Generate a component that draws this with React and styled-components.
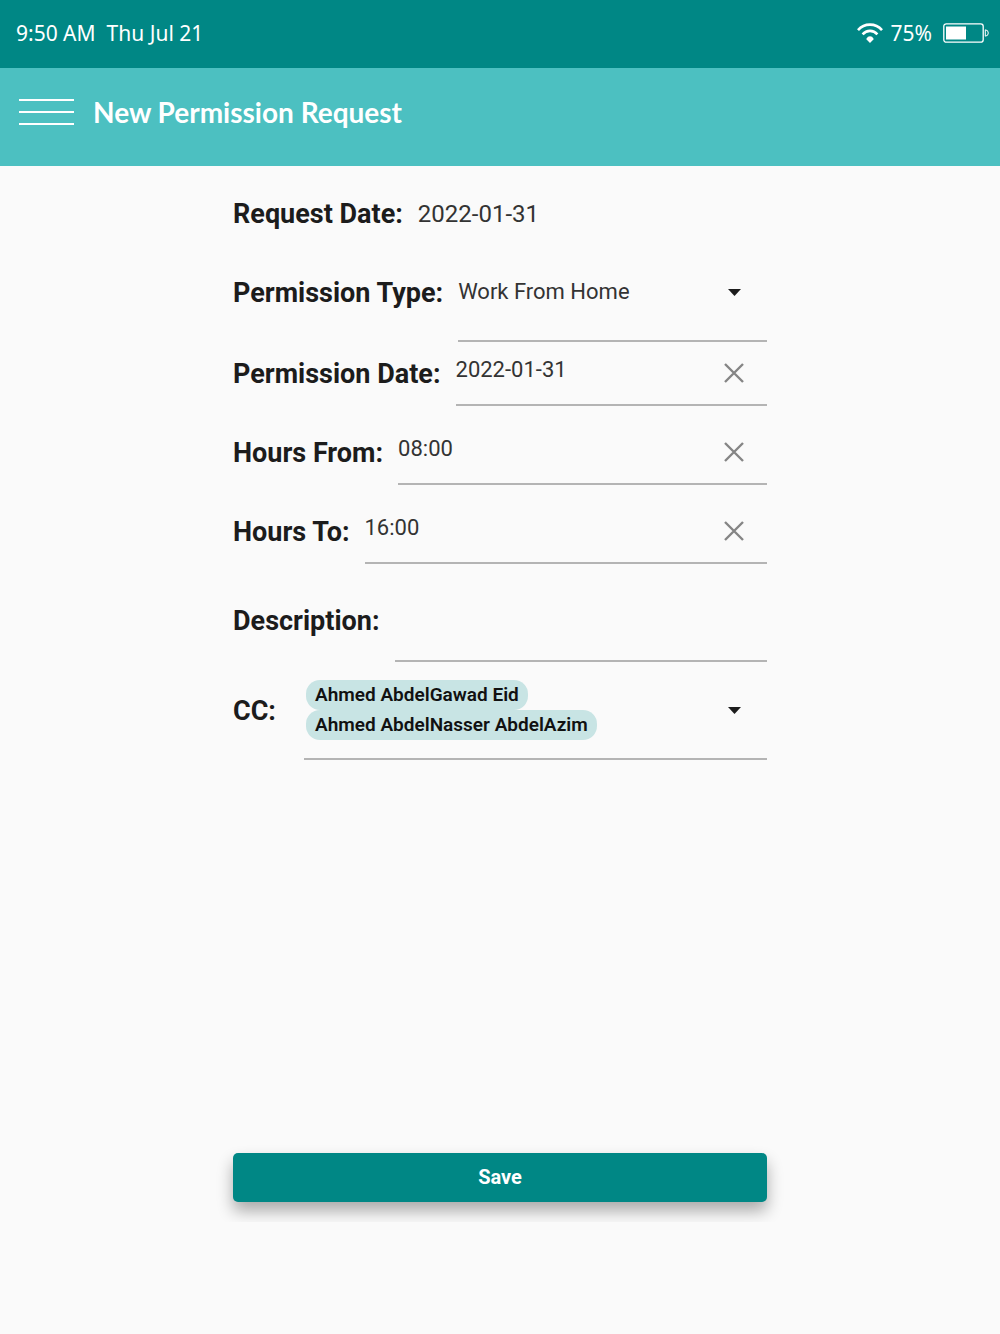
import React, { useState } from "react";
import styled, { createGlobalStyle } from "styled-components";

const GlobalStyle = createGlobalStyle`
  *, *::before, *::after { box-sizing: border-box; }
  body {
    margin: 0;
    background: #fafafa;
    color: #1c1c1c;
    font-family: Roboto, "Liberation Sans", sans-serif;
  }
  button, input, select { font: inherit; color: inherit; }
`;

const Page = styled.div`
  display: flex;
  flex-direction: column;
  min-height: 100vh;
`;

const StatusBar = styled.div`
  display: flex;
  align-items: center;
  justify-content: space-between;
  height: 68px;
  padding: 0 11px 2px 16px;
  background: #008785;
  color: #fff;
  font-family: "Noto Sans", sans-serif;
  font-size: 21px;
`;

const StatusGroup = styled.div`
  display: flex;
  align-items: center;
  gap: ${({ $gap }) => $gap}px;
`;

const Battery = styled.svg`
  margin-left: 3px;
`;

const Header = styled.header`
  display: flex;
  align-items: center;
  gap: 19px;
  height: 98px;
  padding: 0 19px 10px;
  background: #4cc0c1;
  color: #fff;
`;

const MenuButton = styled.button`
  display: flex;
  flex-direction: column;
  gap: 10px;
  width: 55px;
  padding: 0;
  border: 0;
  background: none;
  cursor: pointer;
`;

const MenuLine = styled.span`
  height: 2px;
  background: #fff;
`;

const Title = styled.h1`
  margin: 0;
  font-family: Lato, "Noto Sans", sans-serif;
  font-size: 28px;
  font-weight: 700;
`;

const Form = styled.form`
  display: flex;
  flex: 1;
  flex-direction: column;
  width: 100%;
  max-width: 534px;
  margin: 0 auto;
  padding: 18px 0 112px;
`;

const Row = styled.div`
  display: flex;
  gap: 15px;
  height: ${({ $height }) => $height}px;
  margin-top: ${({ $spaced }) => ($spaced ? 15 : 0)}px;
`;

const Label = styled.label`
  align-self: center;
  flex: none;
  min-width: 56px;
  font-size: 27px;
  font-weight: 700;
  white-space: nowrap;
`;

const DateText = styled.output`
  align-self: center;
  font-size: 24px;
  color: #333;
`;

const Field = styled.div`
  position: relative;
  display: flex;
  flex: 1;
  align-items: center;
  min-width: 0;
  border-bottom: 2px solid #b4b4b4;
`;

const TextInput = styled.input`
  flex: 1;
  min-width: 0;
  height: 100%;
  padding: 0 0 8px;
  border: 0;
  outline: 0;
  background: none;
  font-size: 22px;
  color: #333;
`;

const Select = styled.select`
  flex: 1;
  height: 100%;
  padding: 0 48px 2px 0;
  border: 0;
  outline: 0;
  appearance: none;
  background: none;
  font-size: 22px;
  color: #333;
`;

const ClearButton = styled.button`
  display: flex;
  margin-right: 23px;
  padding: 0;
  border: 0;
  background: none;
  cursor: pointer;
`;

const ArrowIcon = styled.svg`
  position: absolute;
  right: 26px;
  pointer-events: none;
`;

const ChipPicker = styled.button`
  display: flex;
  flex: 1;
  flex-direction: column;
  align-items: flex-start;
  justify-content: center;
  height: 100%;
  padding: 0 48px 0 2px;
  border: 0;
  background: none;
  cursor: pointer;
`;

const Chip = styled.span`
  padding: 0 9px;
  border-radius: 14px;
  background: #c8e4e4;
  color: #111;
  font-size: 19px;
  font-weight: 600;
  line-height: 30px;
`;

const Actions = styled.div`
  margin: auto -24px 0;
  padding: 20px 24px;
  overflow: hidden;
`;

const SaveButton = styled.button`
  display: block;
  width: 100%;
  height: 49px;
  padding: 0 0 2px;
  border: 0;
  border-radius: 5px;
  background: #008785;
  box-shadow: 0 9px 16px rgba(0, 0, 0, 0.32);
  color: #fff;
  font-size: 20px;
  font-weight: 700;
  cursor: pointer;
`;

function WifiIcon() {
  return (
    <svg width="26" height="20" viewBox="0 0 26 20" fill="none" stroke="#fff" strokeWidth="2.6" aria-hidden="true">
      <path d="M1 7.200C7.500-.2 18.500-.2 25 7.200" />
      <path d="M5.600 11.300C9.700 6.700 16.300 6.700 20.400 11.300" />
      <path d="M13 20 9.600 16.600V15.400Q10.600 13.200 13 13.200T16.400 15.400V16.600Z" fill="#fff" stroke="none" />
    </svg>
  );
}

function BatteryIcon() {
  return (
    <Battery width="46" height="20" viewBox="0 0 46 20" fill="none" stroke="#fff" role="img" aria-label="Battery">
      <rect x=".8" y=".8" width="39.400" height="18.400" rx="2.500" strokeWidth="1.300" />
      <rect x="3" y="3.500" width="20" height="13" fill="#fff" stroke="none" />
      <path d="M42.300 6.800V13.200Q45.300 13 45.300 10T42.300 6.800Z" />
    </Battery>
  );
}

function Arrow() {
  return (
    <ArrowIcon width="13" height="7" viewBox="0 0 13 7" aria-hidden="true">
      <path d="M0 0H13L6.500 7Z" fill="#1c1c1c" />
    </ArrowIcon>
  );
}

function ClearableRow({ id, label, initial, height, spaced }) {
  const [value, setValue] = useState(initial);
  return (
    <Row $height={height} $spaced={spaced}>
      <Label htmlFor={id}>{label}</Label>
      <Field>
        <TextInput id={id} value={value} onChange={(e) => setValue(e.target.value)} />
        <ClearButton type="button" aria-label={`Clear ${label}`} onClick={() => setValue("")}>
          <svg width="20" height="20" viewBox="0 0 20 20" stroke="#858585" strokeWidth="2.400" aria-hidden="true">
            <path d="M1 1 19 19M19 1 1 19" />
          </svg>
        </ClearButton>
      </Field>
    </Row>
  );
}

const people = ["Ahmed AbdelGawad Eid", "Ahmed AbdelNasser AbdelAzim"];

export default function App() {
  return (
    <Page>
      <GlobalStyle />
      <StatusBar>
        <StatusGroup $gap={11}>
          <span>9:50 AM</span>
          <span>Thu Jul 21</span>
        </StatusGroup>
        <StatusGroup $gap={8}>
          <WifiIcon />
          <span>75%</span>
          <BatteryIcon />
        </StatusGroup>
      </StatusBar>
      <Header>
        <MenuButton type="button" aria-label="Menu">
          <MenuLine />
          <MenuLine />
          <MenuLine />
        </MenuButton>
        <Title>New Permission Request</Title>
      </Header>
      <Form onSubmit={(e) => e.preventDefault()}>
        <Row $height={60}>
          <Label htmlFor="request-date">Request Date:</Label>
          <DateText id="request-date">2022-01-31</DateText>
        </Row>
        <Row $height={98}>
          <Label htmlFor="type">Permission Type:</Label>
          <Field>
            <Select id="type" defaultValue="home">
              <option value="home">Work From Home</option>
            </Select>
            <Arrow />
          </Field>
        </Row>
        <ClearableRow id="date" label="Permission Date:" initial="2022-01-31" height={64} />
        <ClearableRow id="from" label="Hours From:" initial="08:00" height={64} spaced />
        <ClearableRow id="to" label="Hours To:" initial="16:00" height={64} spaced />
        <Row $height={83} $spaced>
          <Label htmlFor="description">Description:</Label>
          <Field>
            <TextInput id="description" />
          </Field>
        </Row>
        <Row $height={98}>
          <Label htmlFor="cc">CC:</Label>
          <Field>
            <ChipPicker id="cc" type="button" aria-haspopup="listbox">
              {people.map((name) => (
                <Chip key={name}>{name}</Chip>
              ))}
            </ChipPicker>
            <Arrow />
          </Field>
        </Row>
        <Actions>
          <SaveButton type="submit">Save</SaveButton>
        </Actions>
      </Form>
    </Page>
  );
}
